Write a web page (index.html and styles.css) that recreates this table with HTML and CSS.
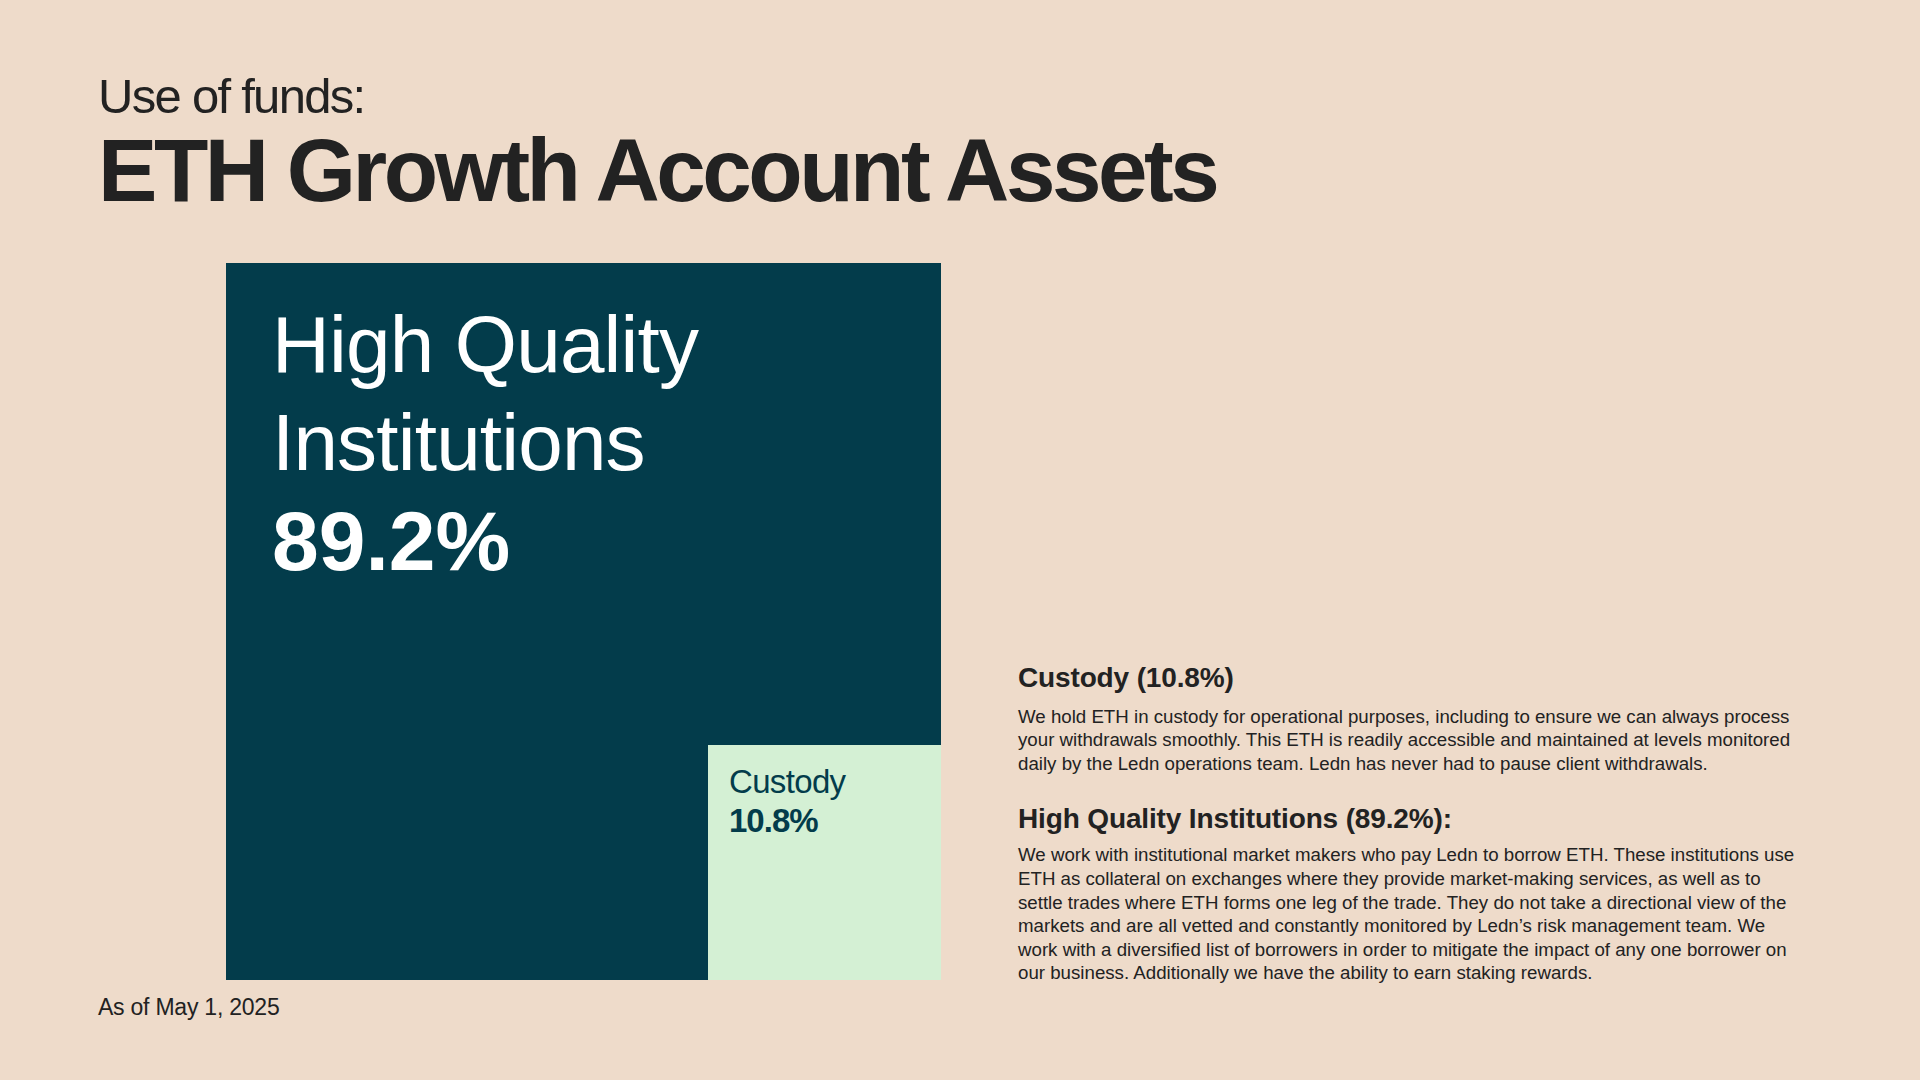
FILE: index.html
```html
<!DOCTYPE html>
<html lang="en">
<head>
<meta charset="utf-8">
<title>Use of funds: ETH Growth Account Assets</title>
<link rel="stylesheet" href="styles.css">
</head>
<body>
<main class="page">
  <header class="header">
    <p class="eyebrow">Use of funds:</p>
    <h1 class="title">ETH Growth Account Assets</h1>
  </header>
  <section class="content">
    <div class="treemap">
      <div class="tm-main">
        <div class="tm-name">High Quality<br>Institutions</div>
        <div class="tm-value">89.2%</div>
      </div>
      <div class="tm-custody">
        <div class="tc-name">Custody</div>
        <div class="tc-value">10.8%</div>
      </div>
    </div>
    <div class="notes">
      <h2 class="note-title">Custody (10.8%)</h2>
      <p class="note-body">We hold ETH in custody for operational purposes, including to ensure we can always process<br>your withdrawals smoothly. This ETH is readily accessible and maintained at levels monitored<br>daily by the Ledn operations team. Ledn has never had to pause client withdrawals.</p>
      <h2 class="note-title note-title-2">High Quality Institutions (89.2%):</h2>
      <p class="note-body">We work with institutional market makers who pay Ledn to borrow ETH. These institutions use<br>ETH as collateral on exchanges where they provide market-making services, as well as to<br>settle trades where ETH forms one leg of the trade. They do not take a directional view of the<br>markets and are all vetted and constantly monitored by Ledn’s risk management team. We<br>work with a diversified list of borrowers in order to mitigate the impact of any one borrower on<br>our business. Additionally we have the ability to earn staking rewards.</p>
    </div>
  </section>
  <footer class="footer">As of May 1, 2025</footer>
</main>
</body>
</html>
```
FILE: styles.css
```css
* { box-sizing: border-box; }
html, body {
  margin: 0;
  padding: 0;
  width: 1920px;
  height: 1080px;
  overflow: hidden;
  background: #eedbca;
}
body {
  font-family: "Liberation Sans", Arial, sans-serif;
  color: #222222;
}
.page {
  padding: 71.5px 0 0 98px;
}
.header { margin: 0; }
.eyebrow {
  margin: 0;
  font-size: 49px;
  line-height: 49px;
  font-weight: 400;
  letter-spacing: -0.035em;
}
.title {
  margin: 5px 0 0 0;
  font-size: 89px;
  line-height: 89px;
  font-weight: 700;
  letter-spacing: -0.039em;
}
.content {
  display: flex;
  align-items: flex-end;
  margin-top: 48.5px;
  padding-left: 128px;
}
.treemap {
  width: 715px;
  height: 717px;
  background: #033c4b;
  display: flex;
  flex-direction: column;
  justify-content: space-between;
  flex: none;
}
.tm-main {
  padding: 33px 0 0 46px;
  color: #ffffff;
}
.tm-name {
  font-size: 80px;
  line-height: 98px;
  font-weight: 400;
  letter-spacing: -0.01em;
}
.tm-value {
  font-size: 84px;
  line-height: 98px;
  font-weight: 700;
  letter-spacing: 0;
}
.tm-custody {
  align-self: flex-end;
  width: 233px;
  height: 235px;
  background: #d4f0d4;
  color: #033c4b;
  padding: 17px 0 0 21px;
}
.tc-name {
  font-size: 33px;
  line-height: 39px;
  letter-spacing: -0.02em;
}
.tc-value {
  font-size: 33px;
  line-height: 39px;
  font-weight: 700;
  letter-spacing: -0.03em;
}
.notes {
  margin-left: 77px;
  margin-bottom: -5px;
  width: 800px;
}
.note-title {
  margin: 0;
  font-size: 28px;
  line-height: 34px;
  font-weight: 700;
  letter-spacing: -0.005em;
}
.note-title-2 {
  margin-top: 26.5px;
}
.note-body {
  margin: 9.5px 0 0 0;
  font-size: 18.7px;
  line-height: 23.6px;
  letter-spacing: 0;
  white-space: nowrap;
}
.note-title-2 + .note-body {
  margin-top: 7.5px;
}
.footer {
  margin-top: 15.5px;
  font-size: 23px;
  line-height: 23px;
  letter-spacing: -0.01em;
}
```
